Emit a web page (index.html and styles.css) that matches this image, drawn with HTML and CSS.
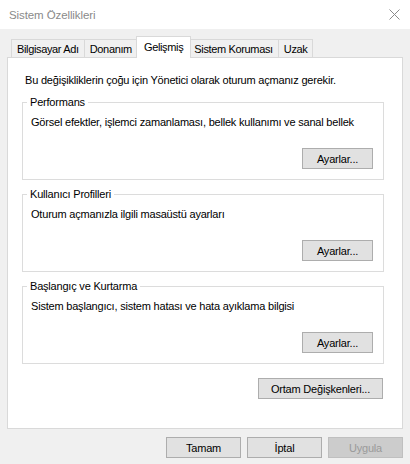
FILE: index.html
```html
<!DOCTYPE html>
<html lang="tr">
<head>
<meta charset="utf-8">
<title>Sistem Özellikleri</title>
<link rel="stylesheet" href="styles.css">
</head>
<body>
<div class="window">
  <header class="titlebar">
    <span class="title">Sistem Özellikleri</span>
    <svg class="close" width="11" height="11" viewBox="0 0 11 11" aria-hidden="true">
      <path d="M0.5 0.5 L10.5 10.5 M10.5 0.5 L0.5 10.5" stroke="#8a8a8a" stroke-width="1" fill="none"/>
    </svg>
  </header>
  <main class="client">
    <nav class="tabs">
      <div class="tab">Bilgisayar Adı</div>
      <div class="tab">Donanım</div>
      <div class="tab active">Gelişmiş</div>
      <div class="tab">Sistem Koruması</div>
      <div class="tab">Uzak</div>
    </nav>
    <section class="panel">
      <p class="note">Bu değişikliklerin çoğu için Yönetici olarak oturum açmanız gerekir.</p>
      <fieldset class="group">
        <legend>Performans</legend>
        <p class="desc">Görsel efektler, işlemci zamanlaması, bellek kullanımı ve sanal bellek</p>
        <div class="actions"><button class="btn btn-settings" type="button">Ayarlar...</button></div>
      </fieldset>
      <fieldset class="group">
        <legend>Kullanıcı Profilleri</legend>
        <p class="desc">Oturum açmanızla ilgili masaüstü ayarları</p>
        <div class="actions"><button class="btn btn-settings" type="button">Ayarlar...</button></div>
      </fieldset>
      <fieldset class="group">
        <legend>Başlangıç ve Kurtarma</legend>
        <p class="desc">Sistem başlangıcı, sistem hatası ve hata ayıklama bilgisi</p>
        <div class="actions"><button class="btn btn-settings" type="button">Ayarlar...</button></div>
      </fieldset>
      <div class="env"><button class="btn btn-env" type="button">Ortam Değişkenleri...</button></div>
    </section>
    <footer class="footer">
      <button class="btn btn-dialog" type="button">Tamam</button>
      <button class="btn btn-dialog" type="button">İptal</button>
      <button class="btn btn-dialog" type="button" disabled>Uygula</button>
    </footer>
  </main>
</div>
</body>
</html>
```
FILE: styles.css
```css
* {
  box-sizing: border-box;
}

html,
body {
  margin: 0;
  padding: 0;
}

body {
  width: 410px;
  height: 464px;
  overflow: hidden;
  background: #f0f0f0;
  color: #000;
  font-family: "Liberation Sans", Arial, sans-serif;
  font-size: 11px;
  letter-spacing: -0.2px;
}

.titlebar {
  height: 29px;
  background: #fff;
  display: flex;
  align-items: center;
  justify-content: space-between;
  padding: 0 10px 0 9px;
}

.title {
  color: #8a8a8a;
  font-size: 11.5px;
  letter-spacing: -0.1px;
}

.close {
  display: block;
}

.client {
  padding: 7px 7px 0 7px;
}

.tabs {
  display: flex;
  align-items: flex-start;
  height: 22px;
  padding-left: 4px;
  margin-bottom: -1px;
  position: relative;
  z-index: 1;
}

.tab {
  height: 18px;
  margin-top: 3px;
  padding: 2px 5px 0;
  border: 1px solid #d9d9d9;
  border-bottom: 0;
  line-height: 15px;
  letter-spacing: -0.35px;
  background: #f0f0f0;
  white-space: nowrap;
}

.tab + .tab {
  margin-left: -1px;
}

.tab.active {
  height: 22px;
  margin-top: 0;
  margin-left: -2px;
  margin-right: -2px;
  padding: 3px 7px 0;
  background: #fff;
  position: relative;
  z-index: 1;
}

.panel {
  height: 372px;
  background: #fff;
  border: 1px solid #d9d9d9;
  padding: 15px 18px 0 14px;
}

.note {
  margin: 0 0 0 3px;
  line-height: 15px;
}

.group {
  margin: 7px 0 0;
  padding: 0 10px 10px 8px;
  border: 1px solid #dcdcdc;
  min-width: 0;
}

.group legend {
  padding: 0 3px;
  margin-left: -4px;
  line-height: 15px;
}

.desc {
  margin: 5px 0 0;
  line-height: 15px;
}

.actions {
  display: flex;
  justify-content: flex-end;
  margin-top: 18px;
}

.btn {
  font: inherit;
  letter-spacing: inherit;
  height: 21px;
  padding: 0;
  background: #e1e1e1;
  border: 1px solid #adadad;
  color: #000;
}

.btn:disabled {
  background: #cccccc;
  border-color: #bfbfbf;
  color: #9a9a9a;
}

.btn-settings {
  width: 71px;
}

.env {
  display: flex;
  justify-content: flex-end;
  margin-top: 14px;
  padding-right: 1px;
}

.btn-env {
  width: 125px;
}

.footer {
  display: flex;
  justify-content: flex-end;
  gap: 6px;
  padding-top: 8px;
}

.btn-dialog {
  width: 75px;
}
```
